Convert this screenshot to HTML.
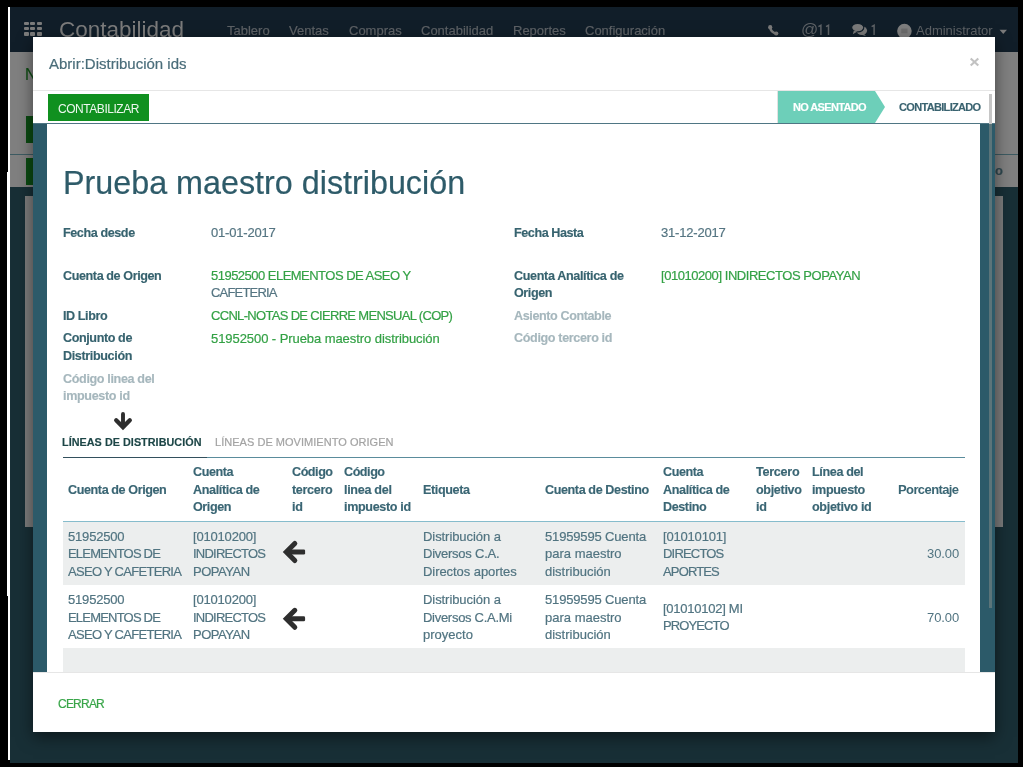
<!DOCTYPE html>
<html><head><meta charset="utf-8">
<style>
html,body{margin:0;padding:0;}
body{width:1023px;height:767px;overflow:hidden;background:#000;position:relative;font-family:"Liberation Sans",sans-serif;}
.t{position:absolute;white-space:nowrap;line-height:1;will-change:transform;}
.r{position:absolute;}
svg{position:absolute;}
</style></head><body>
<div class="r" style="left:8px;top:7px;width:2px;height:165px;background:#fff;"></div>
<div class="r" style="left:7px;top:172px;width:3px;height:424px;background:#fff;"></div>
<div class="r" style="left:8px;top:596px;width:2px;height:164px;background:#fff;"></div>
<div class="r" style="left:10px;top:7px;width:1008px;height:756px;background:#182f36;"></div>
<div class="r" style="left:10px;top:7px;width:1008px;height:45px;background:#111e29;"></div>
<div class="r" style="left:23.9px;top:21.8px;width:4.9px;height:3.5px;background:#7b7b7b;border-radius:1px;"></div>
<div class="r" style="left:23.9px;top:26.9px;width:4.9px;height:3.5px;background:#7b7b7b;border-radius:1px;"></div>
<div class="r" style="left:23.9px;top:32.1px;width:4.9px;height:3.5px;background:#7b7b7b;border-radius:1px;"></div>
<div class="r" style="left:30.2px;top:21.8px;width:4.9px;height:3.5px;background:#7b7b7b;border-radius:1px;"></div>
<div class="r" style="left:30.2px;top:26.9px;width:4.9px;height:3.5px;background:#7b7b7b;border-radius:1px;"></div>
<div class="r" style="left:30.2px;top:32.1px;width:4.9px;height:3.5px;background:#7b7b7b;border-radius:1px;"></div>
<div class="r" style="left:36.75px;top:21.8px;width:4.9px;height:3.5px;background:#7b7b7b;border-radius:1px;"></div>
<div class="r" style="left:36.75px;top:26.9px;width:4.9px;height:3.5px;background:#7b7b7b;border-radius:1px;"></div>
<div class="r" style="left:36.75px;top:32.1px;width:4.9px;height:3.5px;background:#7b7b7b;border-radius:1px;"></div>
<div class="t" style="left:58.8px;top:19.25px;font-size:22.5px;color:#7b7b7b;">Contabilidad</div>
<div class="t" style="left:227px;top:23.70px;font-size:13px;color:#5e6266;-webkit-text-stroke:0.2px #5e6266;">Tablero</div>
<div class="t" style="left:289.3px;top:23.70px;font-size:13px;color:#5e6266;-webkit-text-stroke:0.2px #5e6266;">Ventas</div>
<div class="t" style="left:349px;top:23.70px;font-size:13px;color:#5e6266;-webkit-text-stroke:0.2px #5e6266;">Compras</div>
<div class="t" style="left:420.5px;top:23.70px;font-size:13px;color:#5e6266;-webkit-text-stroke:0.2px #5e6266;">Contabilidad</div>
<div class="t" style="left:513px;top:23.70px;font-size:13px;color:#5e6266;-webkit-text-stroke:0.2px #5e6266;">Reportes</div>
<div class="t" style="left:585px;top:23.70px;font-size:13px;color:#5e6266;-webkit-text-stroke:0.2px #5e6266;">Configuración</div>
<svg style="left:0;top:0" width="1023" height="52" viewBox="0 0 1023 52"><path d="M770.2 27.2 Q770.6 32.6 776.4 33.6" stroke="#7a7a7a" stroke-width="2.4" fill="none"/><ellipse cx="770.2" cy="27.3" rx="2.1" ry="2.2" fill="#7a7a7a"/><ellipse cx="776.2" cy="33.5" rx="2.2" ry="2.0" fill="#7a7a7a"/><path d="M818.4 26.6 L820.9 25.3 V34.9" stroke="#5e6266" stroke-width="1.5" fill="none"/><path d="M826 26.6 L828.5 25.3 V34.9" stroke="#5e6266" stroke-width="1.5" fill="none"/><ellipse cx="861.8" cy="30.6" rx="5.3" ry="4.3" fill="#7a7a7a"/><path d="M863.5 33.5 L866 35.9 L860.5 34.6 Z" fill="#7a7a7a"/><ellipse cx="857.7" cy="27.6" rx="6.1" ry="4.3" fill="#7a7a7a" stroke="#111e29" stroke-width="1.2"/><path d="M853.8 30.8 L852.8 34.2 L857.5 31.6 Z" fill="#7a7a7a"/><path d="M871.6 26.6 L874.1 25.3 V34.9" stroke="#5e6266" stroke-width="1.5" fill="none"/><circle cx="904.4" cy="31.1" r="7.3" fill="#7e7e7e"/><rect x="901.3" y="28.6" width="6.2" height="4.6" fill="#6c6c6c"/><path d="M999.5 29.8 L1007 29.8 L1003.25 33.9 Z" fill="#7a7a7a"/></svg>
<div class="t" style="left:800.5px;top:20.60px;font-size:17px;color:#5e6266;">@</div>
<div class="t" style="left:915.5px;top:23.70px;font-size:13px;color:#5e6266;">Administrator</div>
<div class="r" style="left:10px;top:52px;width:1008px;height:135px;background:#808080;"></div>
<div class="r" style="left:10px;top:153.6px;width:1008px;height:1.4px;background:#3d5b62;"></div>
<div class="t" style="left:25px;top:66.50px;font-size:16px;color:#0f4d14;-webkit-text-stroke:0.2px #0f4d14;">N</div>
<div class="r" style="left:26px;top:116px;width:20px;height:27px;background:#0b4a12;"></div>
<div class="r" style="left:26px;top:157.5px;width:20px;height:27px;background:#0b4a12;"></div>
<div class="t" style="left:995px;top:163.50px;font-size:13px;color:#2e4850;font-weight:bold;-webkit-text-stroke:0.15px #2e4850;">o</div>
<div class="r" style="left:24.5px;top:196px;width:9px;height:331px;background:#7c7c7c;"></div>
<div class="r" style="left:995px;top:196px;width:8px;height:331px;background:#7c7c7c;"></div>
<div class="r" style="left:33px;top:37px;width:962px;height:695px;background:#fff;box-shadow:0 5px 15px rgba(0,0,0,0.5);"></div>
<div class="t" style="left:48.5px;top:56.20px;font-size:15px;color:#4a6d7a;-webkit-text-stroke:0.2px #4a6d7a;">Abrir:Distribución ids</div>
<svg style="left:965px;top:53px" width="20" height="18" viewBox="965 53 20 18"><path d="M970.7 58.4 L978.3 65.6 M978.3 58.4 L970.7 65.6" stroke="#c2c2c2" stroke-width="2.1"/></svg>
<div class="r" style="left:33px;top:90px;width:962px;height:1px;background:#e6e6e6;"></div>
<div class="r" style="left:48px;top:94px;width:101px;height:27px;background:#10901f;"></div>
<div class="t" style="left:58.4px;top:102.60px;font-size:12px;color:#eef7ef;letter-spacing:-0.455px;">CONTABILIZAR</div>
<div class="r" style="left:777px;top:91px;width:1px;height:32px;background:#e2e2e2;"></div>
<svg style="left:778px;top:91px" width="108" height="32" viewBox="0 0 108 32"><path d="M0 0 H97 L107 16 L97 32 H0 Z" fill="#6dcfb9"/></svg>
<div class="t" style="left:793px;top:102.00px;font-size:11px;color:#ffffff;font-weight:bold;letter-spacing:-0.641px;-webkit-text-stroke:0.15px #ffffff;">NO ASENTADO</div>
<div class="t" style="left:898.6px;top:102.00px;font-size:11px;color:#3a6370;font-weight:bold;letter-spacing:-0.672px;-webkit-text-stroke:0.15px #3a6370;">CONTABILIZADO</div>
<div class="r" style="left:33px;top:123px;width:962px;height:1px;background:#4f7684;"></div>
<div class="r" style="left:33px;top:124px;width:962px;height:548px;background:#2c5a69;"></div>
<div class="r" style="left:47.4px;top:124px;width:933.1px;height:548px;background:#fff;"></div>
<div class="r" style="left:989.3px;top:93.5px;width:3px;height:30px;background:#c6c6c6;"></div>
<div class="r" style="left:989.3px;top:123.5px;width:3px;height:484.5px;background:#5b7479;"></div>
<div class="t" style="left:62.6px;top:167.45px;font-size:32.3px;color:#2e5b69;-webkit-text-stroke:0.2px #2e5b69;">Prueba maestro distribución</div>
<div class="t" style="left:63px;top:226.90px;font-size:12.6px;color:#37636f;font-weight:bold;letter-spacing:-0.414px;-webkit-text-stroke:0.15px #37636f;">Fecha desde</div>
<div class="t" style="left:211px;top:226.20px;font-size:13px;color:#557582;letter-spacing:-0.197px;-webkit-text-stroke:0.2px #557582;">01-01-2017</div>
<div class="t" style="left:513.7px;top:226.90px;font-size:12.6px;color:#37636f;font-weight:bold;letter-spacing:-0.433px;-webkit-text-stroke:0.15px #37636f;">Fecha Hasta</div>
<div class="t" style="left:661px;top:226.20px;font-size:13px;color:#557582;letter-spacing:-0.197px;-webkit-text-stroke:0.2px #557582;">31-12-2017</div>
<div class="t" style="left:63px;top:269.50px;font-size:12.6px;color:#37636f;font-weight:bold;letter-spacing:-0.41px;-webkit-text-stroke:0.15px #37636f;">Cuenta de Origen</div>
<div class="t" style="left:211px;top:268.80px;font-size:13px;color:#33a145;letter-spacing:-0.52px;-webkit-text-stroke:0.2px #33a145;">51952500 ELEMENTOS DE ASEO Y</div>
<div class="t" style="left:211px;top:286.40px;font-size:13px;color:#557582;letter-spacing:-0.811px;-webkit-text-stroke:0.2px #557582;">CAFETERIA</div>
<div class="t" style="left:513.7px;top:269.50px;font-size:12.6px;color:#37636f;font-weight:bold;letter-spacing:-0.355px;-webkit-text-stroke:0.15px #37636f;">Cuenta Analítica de</div>
<div class="t" style="left:513.7px;top:287.10px;font-size:12.6px;color:#37636f;font-weight:bold;letter-spacing:-0.438px;-webkit-text-stroke:0.15px #37636f;">Origen</div>
<div class="t" style="left:661px;top:268.80px;font-size:13px;color:#33a145;letter-spacing:-0.45px;-webkit-text-stroke:0.2px #33a145;">[01010200] INDIRECTOS POPAYAN</div>
<div class="t" style="left:63px;top:309.60px;font-size:12.6px;color:#37636f;font-weight:bold;letter-spacing:-0.425px;-webkit-text-stroke:0.15px #37636f;">ID Libro</div>
<div class="t" style="left:211px;top:308.90px;font-size:13px;color:#33a145;letter-spacing:-0.681px;-webkit-text-stroke:0.2px #33a145;">CCNL-NOTAS DE CIERRE MENSUAL (COP)</div>
<div class="t" style="left:513.7px;top:309.60px;font-size:12.6px;color:#a6b7bd;font-weight:bold;letter-spacing:-0.404px;-webkit-text-stroke:0.15px #a6b7bd;">Asiento Contable</div>
<div class="t" style="left:63px;top:332.30px;font-size:12.6px;color:#37636f;font-weight:bold;letter-spacing:-0.404px;-webkit-text-stroke:0.15px #37636f;">Conjunto de</div>
<div class="t" style="left:63px;top:349.80px;font-size:12.6px;color:#37636f;font-weight:bold;letter-spacing:-0.37px;-webkit-text-stroke:0.15px #37636f;">Distribución</div>
<div class="t" style="left:211px;top:331.60px;font-size:13px;color:#33a145;letter-spacing:-0.068px;-webkit-text-stroke:0.2px #33a145;">51952500 - Prueba maestro distribución</div>
<div class="t" style="left:513.7px;top:332.30px;font-size:12.6px;color:#a6b7bd;font-weight:bold;letter-spacing:-0.363px;-webkit-text-stroke:0.15px #a6b7bd;">Código tercero id</div>
<div class="t" style="left:63px;top:372.60px;font-size:12.6px;color:#a6b7bd;font-weight:bold;letter-spacing:-0.361px;-webkit-text-stroke:0.15px #a6b7bd;">Código linea del</div>
<div class="t" style="left:63px;top:389.90px;font-size:12.6px;color:#a6b7bd;font-weight:bold;letter-spacing:-0.36px;-webkit-text-stroke:0.15px #a6b7bd;">impuesto id</div>
<svg style="left:110px;top:408px" width="26" height="26" viewBox="110 408 26 26"><path d="M123 414 V426" stroke="#2e2e2e" stroke-width="3.9" stroke-linecap="round" fill="none"/><path d="M116.2 420.3 L123 427.1 L129.8 420.3" stroke="#2e2e2e" stroke-width="4.3" stroke-linecap="round" stroke-linejoin="miter" fill="none"/></svg>
<div class="t" style="left:61.8px;top:436.60px;font-size:10.8px;color:#1d4647;font-weight:bold;letter-spacing:0.041px;-webkit-text-stroke:0.15px #1d4647;">LÍNEAS DE DISTRIBUCIÓN</div>
<div class="t" style="left:215.4px;top:436.50px;font-size:11px;color:#a3a3a3;letter-spacing:0.031px;-webkit-text-stroke:0.2px #a3a3a3;">LÍNEAS DE MOVIMIENTO ORIGEN</div>
<div class="r" style="left:63px;top:457px;width:902px;height:1px;background:#5a8c9c;"></div>
<div class="r" style="left:63px;top:457px;width:144px;height:1.2px;background:#33505d;"></div>
<div class="t" style="left:68.3px;top:483.80px;font-size:12.6px;color:#3a6674;font-weight:bold;letter-spacing:-0.41px;-webkit-text-stroke:0.15px #3a6674;">Cuenta de Origen</div>
<div class="t" style="left:193.4px;top:466.20px;font-size:12.6px;color:#3a6674;font-weight:bold;letter-spacing:-0.453px;-webkit-text-stroke:0.15px #3a6674;">Cuenta</div>
<div class="t" style="left:193.4px;top:483.80px;font-size:12.6px;color:#3a6674;font-weight:bold;letter-spacing:-0.357px;-webkit-text-stroke:0.15px #3a6674;">Analítica de</div>
<div class="t" style="left:193.4px;top:501.40px;font-size:12.6px;color:#3a6674;font-weight:bold;letter-spacing:-0.438px;-webkit-text-stroke:0.15px #3a6674;">Origen</div>
<div class="t" style="left:291.5px;top:466.20px;font-size:12.6px;color:#3a6674;font-weight:bold;letter-spacing:-0.46px;-webkit-text-stroke:0.15px #3a6674;">Código</div>
<div class="t" style="left:291.5px;top:483.80px;font-size:12.6px;color:#3a6674;font-weight:bold;letter-spacing:-0.342px;-webkit-text-stroke:0.15px #3a6674;">tercero</div>
<div class="t" style="left:291.5px;top:501.40px;font-size:12.6px;color:#3a6674;font-weight:bold;letter-spacing:-0.314px;-webkit-text-stroke:0.15px #3a6674;">id</div>
<div class="t" style="left:343.5px;top:466.20px;font-size:12.6px;color:#3a6674;font-weight:bold;letter-spacing:-0.46px;-webkit-text-stroke:0.15px #3a6674;">Código</div>
<div class="t" style="left:343.5px;top:483.80px;font-size:12.6px;color:#3a6674;font-weight:bold;letter-spacing:-0.314px;-webkit-text-stroke:0.15px #3a6674;">linea del</div>
<div class="t" style="left:343.5px;top:501.40px;font-size:12.6px;color:#3a6674;font-weight:bold;letter-spacing:-0.36px;-webkit-text-stroke:0.15px #3a6674;">impuesto id</div>
<div class="t" style="left:423.3px;top:483.80px;font-size:12.6px;color:#3a6674;font-weight:bold;letter-spacing:-0.386px;-webkit-text-stroke:0.15px #3a6674;">Etiqueta</div>
<div class="t" style="left:544.5px;top:483.80px;font-size:12.6px;color:#3a6674;font-weight:bold;letter-spacing:-0.403px;-webkit-text-stroke:0.15px #3a6674;">Cuenta de Destino</div>
<div class="t" style="left:663.3px;top:466.20px;font-size:12.6px;color:#3a6674;font-weight:bold;letter-spacing:-0.453px;-webkit-text-stroke:0.15px #3a6674;">Cuenta</div>
<div class="t" style="left:663.3px;top:483.80px;font-size:12.6px;color:#3a6674;font-weight:bold;letter-spacing:-0.357px;-webkit-text-stroke:0.15px #3a6674;">Analítica de</div>
<div class="t" style="left:663.3px;top:501.40px;font-size:12.6px;color:#3a6674;font-weight:bold;letter-spacing:-0.417px;-webkit-text-stroke:0.15px #3a6674;">Destino</div>
<div class="t" style="left:756.3px;top:466.20px;font-size:12.6px;color:#3a6674;font-weight:bold;letter-spacing:-0.276px;-webkit-text-stroke:0.15px #3a6674;">Tercero</div>
<div class="t" style="left:756.3px;top:483.80px;font-size:12.6px;color:#3a6674;font-weight:bold;letter-spacing:-0.338px;-webkit-text-stroke:0.15px #3a6674;">objetivo</div>
<div class="t" style="left:756.3px;top:501.40px;font-size:12.6px;color:#3a6674;font-weight:bold;letter-spacing:-0.314px;-webkit-text-stroke:0.15px #3a6674;">id</div>
<div class="t" style="left:812px;top:466.20px;font-size:12.6px;color:#3a6674;font-weight:bold;letter-spacing:-0.371px;-webkit-text-stroke:0.15px #3a6674;">Línea del</div>
<div class="t" style="left:812px;top:483.80px;font-size:12.6px;color:#3a6674;font-weight:bold;letter-spacing:-0.392px;-webkit-text-stroke:0.15px #3a6674;">impuesto</div>
<div class="t" style="left:812px;top:501.40px;font-size:12.6px;color:#3a6674;font-weight:bold;letter-spacing:-0.321px;-webkit-text-stroke:0.15px #3a6674;">objetivo id</div>
<div class="t" style="right:64.20000000000005px;top:483.10px;font-size:13px;color:#3a6674;font-weight:bold;letter-spacing:-0.6px;">Porcentaje</div>
<div class="r" style="left:63px;top:521px;width:902px;height:1px;background:#86bccc;"></div>
<div class="r" style="left:63px;top:522px;width:902px;height:63px;background:#eceeee;"></div>
<div class="r" style="left:63px;top:648px;width:902px;height:24px;background:#eceeee;"></div>
<div class="t" style="left:68.3px;top:529.80px;font-size:13px;color:#517481;letter-spacing:-0.181px;-webkit-text-stroke:0.2px #517481;">51952500</div>
<div class="t" style="left:68.3px;top:547.40px;font-size:13px;color:#517481;letter-spacing:-0.799px;-webkit-text-stroke:0.2px #517481;">ELEMENTOS DE</div>
<div class="t" style="left:68.3px;top:565.00px;font-size:13px;color:#517481;letter-spacing:-0.707px;-webkit-text-stroke:0.2px #517481;">ASEO Y CAFETERIA</div>
<div class="t" style="left:192.9px;top:529.80px;font-size:13px;color:#517481;letter-spacing:-0.188px;-webkit-text-stroke:0.2px #517481;">[01010200]</div>
<div class="t" style="left:192.9px;top:547.40px;font-size:13px;color:#517481;letter-spacing:-0.778px;-webkit-text-stroke:0.2px #517481;">INDIRECTOS</div>
<div class="t" style="left:192.9px;top:565.00px;font-size:13px;color:#517481;letter-spacing:-0.484px;-webkit-text-stroke:0.2px #517481;">POPAYAN</div>
<div class="t" style="left:423.3px;top:529.80px;font-size:13px;color:#517481;letter-spacing:-0.067px;-webkit-text-stroke:0.2px #517481;">Distribución a</div>
<div class="t" style="left:423.3px;top:547.40px;font-size:13px;color:#517481;letter-spacing:-0.244px;-webkit-text-stroke:0.2px #517481;">Diversos C.A.</div>
<div class="t" style="left:423.3px;top:565.00px;font-size:13px;color:#517481;letter-spacing:-0.059px;-webkit-text-stroke:0.2px #517481;">Directos aportes</div>
<div class="t" style="left:544.5px;top:529.80px;font-size:13px;color:#517481;letter-spacing:-0.159px;-webkit-text-stroke:0.2px #517481;">51959595 Cuenta</div>
<div class="t" style="left:544.5px;top:547.40px;font-size:13px;color:#517481;letter-spacing:0.0px;-webkit-text-stroke:0.2px #517481;">para maestro</div>
<div class="t" style="left:544.5px;top:565.00px;font-size:13px;color:#517481;letter-spacing:-0.0px;-webkit-text-stroke:0.2px #517481;">distribución</div>
<div class="t" style="left:663.3px;top:529.80px;font-size:13px;color:#517481;letter-spacing:-0.188px;-webkit-text-stroke:0.2px #517481;">[01010101]</div>
<div class="t" style="left:663.3px;top:547.40px;font-size:13px;color:#517481;letter-spacing:-0.81px;-webkit-text-stroke:0.2px #517481;">DIRECTOS</div>
<div class="t" style="left:663.3px;top:565.00px;font-size:13px;color:#517481;letter-spacing:-0.854px;-webkit-text-stroke:0.2px #517481;">APORTES</div>
<div class="t" style="right:63.60000000000002px;top:547.40px;font-size:13px;color:#517481;letter-spacing:-0.1px;">30.00</div>
<div class="t" style="left:68.3px;top:592.90px;font-size:13px;color:#517481;letter-spacing:-0.181px;-webkit-text-stroke:0.2px #517481;">51952500</div>
<div class="t" style="left:68.3px;top:610.50px;font-size:13px;color:#517481;letter-spacing:-0.799px;-webkit-text-stroke:0.2px #517481;">ELEMENTOS DE</div>
<div class="t" style="left:68.3px;top:628.10px;font-size:13px;color:#517481;letter-spacing:-0.707px;-webkit-text-stroke:0.2px #517481;">ASEO Y CAFETERIA</div>
<div class="t" style="left:192.9px;top:592.90px;font-size:13px;color:#517481;letter-spacing:-0.188px;-webkit-text-stroke:0.2px #517481;">[01010200]</div>
<div class="t" style="left:192.9px;top:610.50px;font-size:13px;color:#517481;letter-spacing:-0.778px;-webkit-text-stroke:0.2px #517481;">INDIRECTOS</div>
<div class="t" style="left:192.9px;top:628.10px;font-size:13px;color:#517481;letter-spacing:-0.484px;-webkit-text-stroke:0.2px #517481;">POPAYAN</div>
<div class="t" style="left:423.3px;top:592.90px;font-size:13px;color:#517481;letter-spacing:-0.067px;-webkit-text-stroke:0.2px #517481;">Distribución a</div>
<div class="t" style="left:423.3px;top:610.50px;font-size:13px;color:#517481;letter-spacing:-0.284px;-webkit-text-stroke:0.2px #517481;">Diversos C.A.Mi</div>
<div class="t" style="left:423.3px;top:628.10px;font-size:13px;color:#517481;letter-spacing:0.0px;-webkit-text-stroke:0.2px #517481;">proyecto</div>
<div class="t" style="left:544.5px;top:592.90px;font-size:13px;color:#517481;letter-spacing:-0.159px;-webkit-text-stroke:0.2px #517481;">51959595 Cuenta</div>
<div class="t" style="left:544.5px;top:610.50px;font-size:13px;color:#517481;letter-spacing:0.0px;-webkit-text-stroke:0.2px #517481;">para maestro</div>
<div class="t" style="left:544.5px;top:628.10px;font-size:13px;color:#517481;letter-spacing:-0.0px;-webkit-text-stroke:0.2px #517481;">distribución</div>
<div class="t" style="left:663.3px;top:601.70px;font-size:13px;color:#517481;letter-spacing:-0.256px;-webkit-text-stroke:0.2px #517481;">[01010102] MI</div>
<div class="t" style="left:663.3px;top:619.30px;font-size:13px;color:#517481;letter-spacing:-0.883px;-webkit-text-stroke:0.2px #517481;">PROYECTO</div>
<div class="t" style="right:63.60000000000002px;top:610.50px;font-size:13px;color:#517481;letter-spacing:-0.1px;">70.00</div>
<svg style="left:278px;top:537px" width="32" height="30" viewBox="278 537 32 30"><rect x="288" y="549.55" width="17.1" height="4.9" rx="1.3" fill="#2e2e2e"/><path d="M294.8 543.5 L286.3 552.0 L294.8 560.5" stroke="#2e2e2e" stroke-width="5" stroke-linecap="round" stroke-linejoin="miter" fill="none"/></svg>
<svg style="left:278px;top:603px" width="32" height="30" viewBox="278 603 32 30"><rect x="288" y="616.3499999999999" width="17.1" height="4.9" rx="1.3" fill="#2e2e2e"/><path d="M294.8 610.3 L286.3 618.8 L294.8 627.3" stroke="#2e2e2e" stroke-width="5" stroke-linecap="round" stroke-linejoin="miter" fill="none"/></svg>
<div class="r" style="left:33px;top:672px;width:962px;height:1px;background:#e6e6e6;"></div>
<div class="r" style="left:33px;top:673px;width:962px;height:59px;background:#fff;"></div>
<div class="t" style="left:58.3px;top:698.00px;font-size:12px;color:#3aa64a;letter-spacing:-0.779px;-webkit-text-stroke:0.2px #3aa64a;">CERRAR</div>
</body></html>
